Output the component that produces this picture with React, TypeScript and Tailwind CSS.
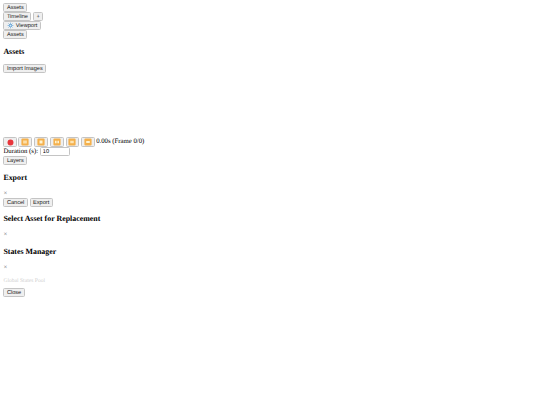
import React from "react";

const crisp = "[text-rendering:geometricPrecision] antialiased";
const btn =
  "box-border flex h-[9px] items-center justify-center rounded-[1.5px] border border-[#c4c4c4] bg-[#efefef] px-[2.5px] pt-[1px] font-['Liberation_Sans',sans-serif] text-[5.625px] leading-[6px] text-[#222] " +
  crisp;
const h3 =
  "m-0 h-[9px] font-['Liberation_Serif',serif] text-[7.9px] font-bold leading-[9px] text-black " + crisp;
const close = "h-[7.7px] font-['Liberation_Serif',serif] text-[6.75px] leading-[7.7px] mt-[8px] text-[#777] " + crisp;

type Kind = "rec" | "prev" | "stop" | "next" | "back" | "fwd";

function Emoji({ kind }: { kind: Kind }) {
  if (kind === "rec")
    return (
      <svg width="7" height="7" viewBox="0 0 8 8">
        <circle cx="4" cy="4" r="3.4" fill="#e8353b" />
      </svg>
    );
  const marks: Record<string, React.ReactNode> = {
    prev: <path d="M2.4 2.6h1.3v2.8H2.4zM4.3 2.6h1.3v2.8H4.3z" fill="#fff3d0" />,
    stop: <rect x="2.5" y="2.5" width="3" height="3" fill="#fff3d0" />,
    next: <path d="M2 2.7h1.6v2.6H2zM4.4 2.7H6v2.6H4.4z" fill="#fff3d0" />,
    back: <path d="M2.4 2.8h1.4v2.4H2.4zM4.2 2.8h1.4v2.4H4.2z" fill="#fff3d0" />,
    fwd: <path d="M2.2 3h3.6v2H2.2z" fill="#fff3d0" />,
  };
  return (
    <svg width="8" height="8" viewBox="0 0 8 8">
      <rect x="0.4" y="0.4" width="7.2" height="7.2" rx="1" fill="#f4b04c" />
      {marks[kind]}
    </svg>
  );
}

function IconBtn({ kind, wide }: { kind: Kind; wide?: boolean }) {
  return (
    <button
      className={
        (wide ? "w-[14.4px] " : "w-[13.4px] ") +
        "box-border flex h-[10px] items-center justify-center rounded-[1.5px] border border-[#c4c4c4] bg-[#efefef]"
      }
    >
      <Emoji kind={kind} />
    </button>
  );
}

export default function App() {
  return (
    <div className="min-h-[405px] w-[540px] bg-white px-[3.4px] pt-[3.4px] font-['Liberation_Serif',serif] text-black">
      <div className="flex">
        <button className={btn}>Assets</button>
      </div>
      <div className="flex gap-[1.7px]">
        <button className={btn}>Timeline</button>
        <button className={btn}>+</button>
      </div>
      <div className="flex">
        <button className={btn + " gap-[1.8px]"}>
          <svg width="7" height="7" viewBox="0 0 8 8" className="-mt-[1px]">
            <path
              d="M4 .6v6.8M.6 4h6.8M1.6 1.6l4.8 4.8M6.4 1.6 1.6 6.4"
              stroke="#8fbde0"
              strokeWidth="1"
            />
            <circle cx="4" cy="4" r="2" fill="#6ea8d6" />
            <circle cx="4" cy="4" r="1" fill="#d5e7f5" />
          </svg>
          Viewport
        </button>
      </div>
      <div className="flex">
        <button className={btn}>Assets</button>
      </div>
      <h3 className={h3 + " mt-[8px]"}>Assets</h3>
      <div className="mt-[8px] flex">
        <button className={btn}>Import Images</button>
      </div>
      <div className="mt-[64px] flex h-[10px] items-center gap-[1.7px]">
        <IconBtn kind="rec" />
        <IconBtn kind="prev" />
        <IconBtn kind="stop" wide />
        <IconBtn kind="next" wide />
        <IconBtn kind="back" />
        <IconBtn kind="fwd" wide />
        <span className={"-ml-[0.7px] text-[6.75px] leading-none font-normal " + crisp}>0.00s (Frame 0/0)</span>
      </div>
      <div className="flex h-[9px] items-center gap-[1.7px]">
        <span className={"text-[6.75px] leading-none " + crisp}>Duration (s):</span>
        <input
          readOnly
          value="10"
          className={
            "box-border h-[9px] w-[30px] rounded-[1.5px] border border-[#c4c4c4] bg-white px-[2px] font-['Liberation_Sans',sans-serif] text-[5.625px] leading-none text-black outline-none " +
            crisp
          }
        />
      </div>
      <div className="flex">
        <button className={btn}>Layers</button>
      </div>
      <h3 className={h3 + " mt-[8px]"}>Export</h3>
      <div className={close}>×</div>
      <div className="flex gap-[1.7px]">
        <button className={btn}>Cancel</button>
        <button className={btn}>Export</button>
      </div>
      <h3 className={h3 + " mt-[7.4px]"}>Select Asset for Replacement</h3>
      <div className={close}>×</div>
      <h3 className={h3 + " mt-[8px]"}>States Manager</h3>
      <div className={close}>×</div>
      <div
        className={
          "mt-[6px] h-[7px] font-['Liberation_Serif',serif] text-[5.6px] leading-[7px] text-[#d0d0d0] " + crisp
        }
      >
        Global States Pool
      </div>
      <div className="mt-[3.6px] flex">
        <button className={btn}>Close</button>
      </div>
    </div>
  );
}
